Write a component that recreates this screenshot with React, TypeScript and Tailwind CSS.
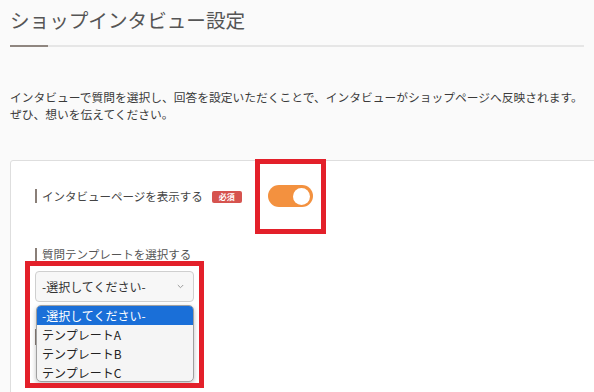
import React from "react";

export default function App() {
  return (
    <div className="relative w-[594px] h-[392px] overflow-hidden bg-[#fafafa] font-['Noto_Sans_CJK_JP','Noto_Sans',sans-serif] text-[#444]">
      <div className="pt-[6px] px-[10px]">
        <h1 className="text-[19.6px] leading-[28px] text-[#555] tracking-[0px]">ショップインタビュー設定</h1>
        <div className="mt-[11px] h-[2px] bg-[#e6e6e6] flex">
          <div className="w-[38px] h-[2px] bg-[#8f8680]" />
        </div>
      </div>
      <p className="mt-[41px] px-[10px] text-[11.75px] leading-[17px] text-[#3a3a3a] whitespace-nowrap">
        インタビューで質問を選択し、回答を設定いただくことで、インタビューがショップページへ反映されます。
        <br />
        ぜひ、想いを伝えてください。
      </p>
      <div className="ml-[10px] mt-[38px] w-[620px] h-[300px] bg-white border border-[#dedede] rounded-[3px] pl-[24px] pt-[24px]">
        <div className="flex items-center h-[22px]">
          <div className="w-[233px] flex items-center">
            <div className="w-[2px] h-[14px] bg-[#8a7f78] mr-[5px]" />
            <span className="text-[11.5px] leading-[17px] text-[#444]">インタビューページを表示する</span>
            <span className="ml-[9px] mt-[2px] h-[12px] w-[30px] rounded-[2px] bg-[#d6534f] text-white text-[8px] leading-[12px] font-bold text-center">
              必須
            </span>
          </div>
          <div className="w-[45px] h-[22px] rounded-full bg-[#f3913f] flex items-center justify-end pr-[3px]">
            <div className="w-[17px] h-[17px] rounded-full bg-white" />
          </div>
        </div>
        <div className="mt-[39px] flex items-center">
          <div className="w-[2px] h-[14px] bg-[#8a7f78] mr-[5px]" />
          <span className="text-[11.5px] leading-[17px] text-[#555]">質問テンプレートを選択する</span>
        </div>
        <div className="mt-[8px] w-[159px] h-[31px] rounded-[4px] border border-[#cfcfcf] bg-[#f7f7f7] flex items-center justify-between pl-[6px] pr-[9px]">
          <span className="text-[12px] leading-[16px] text-[#333]">-選択してください-</span>
          <svg width="7" height="5" viewBox="0 0 7 5">
            <path d="M0.8 1 L3.5 3.7 L6.2 1" fill="none" stroke="#9a9a9a" strokeWidth="1" />
          </svg>
        </div>
        <div className="mt-[27px] w-[2px] h-[16px] bg-[#8a7f78]" />
      </div>

      {/* open select list */}
      <div className="absolute left-[36px] top-[305px] w-[158px] h-[77px] rounded-[5px] border border-[#a0a0a0] bg-[#f5f5f5] shadow-[0_2px_5px_rgba(0,0,0,0.25)] overflow-hidden text-[12px] text-[#222]">
        <div className="h-[19px] leading-[19px] pl-[5px] bg-[#1a6fd8] text-white">-選択してください-</div>
        <div className="h-[19px] leading-[19px] pl-[5px]">テンプレートA</div>
        <div className="h-[19px] leading-[19px] pl-[5px]">テンプレートB</div>
        <div className="h-[19px] leading-[19px] pl-[5px]">テンプレートC</div>
      </div>

      {/* red annotation boxes */}
      <div className="absolute left-[255px] top-[159px] w-[71px] h-[75px] border-[5px] border-[#e3202a]" />
      <div className="absolute left-[25px] top-[261px] w-[179px] h-[127px] border-[5px] border-[#e3202a]" />
    </div>
  );
}
